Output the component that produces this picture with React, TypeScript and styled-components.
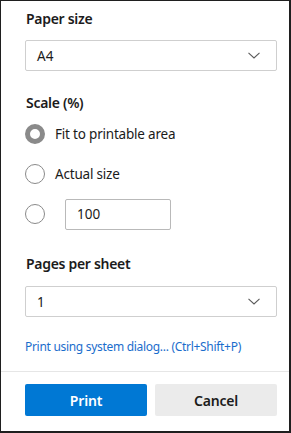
import { type FC } from "react";
import styled, { createGlobalStyle } from "styled-components";

const GlobalStyle = createGlobalStyle`
  html, body {
    margin: 0;
    padding: 0;
    background: #ffffff;
  }
  * {
    box-sizing: border-box;
  }
`;

const Panel = styled.div`
  width: 291px;
  height: 433px;
  display: flex;
  flex-direction: column;
  background: #ffffff;
  border-style: solid;
  border-color: #1f1f1f;
  border-width: 1px 2px 2px 1px;
  font-family: "Noto Sans", "Open Sans", sans-serif;
  color: #1b1b1b;
`;

const Body = styled.div`
  flex: 1;
  padding: 8px 12px 0 24px;
  display: flex;
  flex-direction: column;
`;

const Section = styled.section<{ $gap: number }>`
  margin-top: ${({ $gap }) => $gap}px;
  display: flex;
  flex-direction: column;
`;

const Heading = styled.h3<{ $after: number }>`
  margin: 0 0 ${({ $after }) => $after}px 1px;
  font-size: 14px;
  line-height: 20px;
  font-weight: 600;
  letter-spacing: -0.3px;
  color: #1b1b1b;
`;

const SelectBox = styled.div`
  height: 31px;
  display: flex;
  align-items: center;
  justify-content: space-between;
  padding: 0 16px 0 11px;
  border: 1px solid #cfcfcf;
  border-radius: 2px;
  font-size: 13.5px;
`;

const RadioList = styled.div`
  margin-top: 5px;
  display: flex;
  flex-direction: column;
  gap: 8px;
`;

const RadioRow = styled.label`
  height: 32px;
  display: flex;
  align-items: center;
  gap: 10px;
  font-size: 13.5px;
  letter-spacing: -0.2px;
`;

const RadioDot = styled.span<{ $checked?: boolean }>`
  width: 20px;
  height: 20px;
  flex: none;
  border-radius: 50%;
  background: #ffffff;
  border: ${({ $checked }) => ($checked ? "5px solid #8a8a8a" : "1px solid #8a8a8a")};
`;

const ScaleInput = styled.div`
  margin-left: 10px;
  width: 106px;
  height: 31px;
  display: flex;
  align-items: center;
  padding-left: 11px;
  border: 1px solid #b9b9b9;
  border-radius: 2px;
  font-size: 13.5px;
  letter-spacing: 0;
`;

const SystemLink = styled.a`
  margin-top: 22px;
  font-size: 12px;
  line-height: 16px;
  letter-spacing: -0.3px;
  color: #1a6dcc;
  text-decoration: none;
  cursor: pointer;
`;

const Footer = styled.div`
  border-top: 1px solid #e6e6e6;
  padding: 12px 12px 15px 24px;
  display: grid;
  grid-template-columns: 1fr 1fr;
  gap: 8px;
`;

const Button = styled.button<{ $primary?: boolean }>`
  height: 32px;
  border: none;
  border-radius: 2px;
  font-family: inherit;
  font-size: 14px;
  font-weight: 600;
  letter-spacing: -0.2px;
  background: ${({ $primary }) => ($primary ? "#0078d4" : "#ebebeb")};
  color: ${({ $primary }) => ($primary ? "#ffffff" : "#1b1b1b")};
`;

const Chevron: FC = () => (
  <svg width="12" height="7" viewBox="0 0 12 7" fill="none">
    <path d="M0.5 0.8 L6 6 L11.5 0.8" stroke="#5a5a5a" strokeWidth="1.1" />
  </svg>
);

const Dropdown: FC<{ value: string }> = ({ value }) => (
  <SelectBox>
    <span>{value}</span>
    <Chevron />
  </SelectBox>
);

const App: FC = () => {
  return (
    <>
      <GlobalStyle />
      <Panel>
        <Body>
          <Section $gap={0}>
            <Heading $after={11}>Paper size</Heading>
            <Dropdown value="A4" />
          </Section>

          <Section $gap={22}>
            <Heading $after={0}>Scale (%)</Heading>
            <RadioList>
              <RadioRow>
                <RadioDot $checked />
                Fit to printable area
              </RadioRow>
              <RadioRow>
                <RadioDot />
                Actual size
              </RadioRow>
              <RadioRow>
                <RadioDot />
                <ScaleInput>100</ScaleInput>
              </RadioRow>
            </RadioList>
          </Section>

          <Section $gap={24}>
            <Heading $after={12}>Pages per sheet</Heading>
            <Dropdown value="1" />
          </Section>

          <SystemLink>Print using system dialog... (Ctrl+Shift+P)</SystemLink>
        </Body>

        <Footer>
          <Button $primary>Print</Button>
          <Button>Cancel</Button>
        </Footer>
      </Panel>
    </>
  );
};

export default App;
